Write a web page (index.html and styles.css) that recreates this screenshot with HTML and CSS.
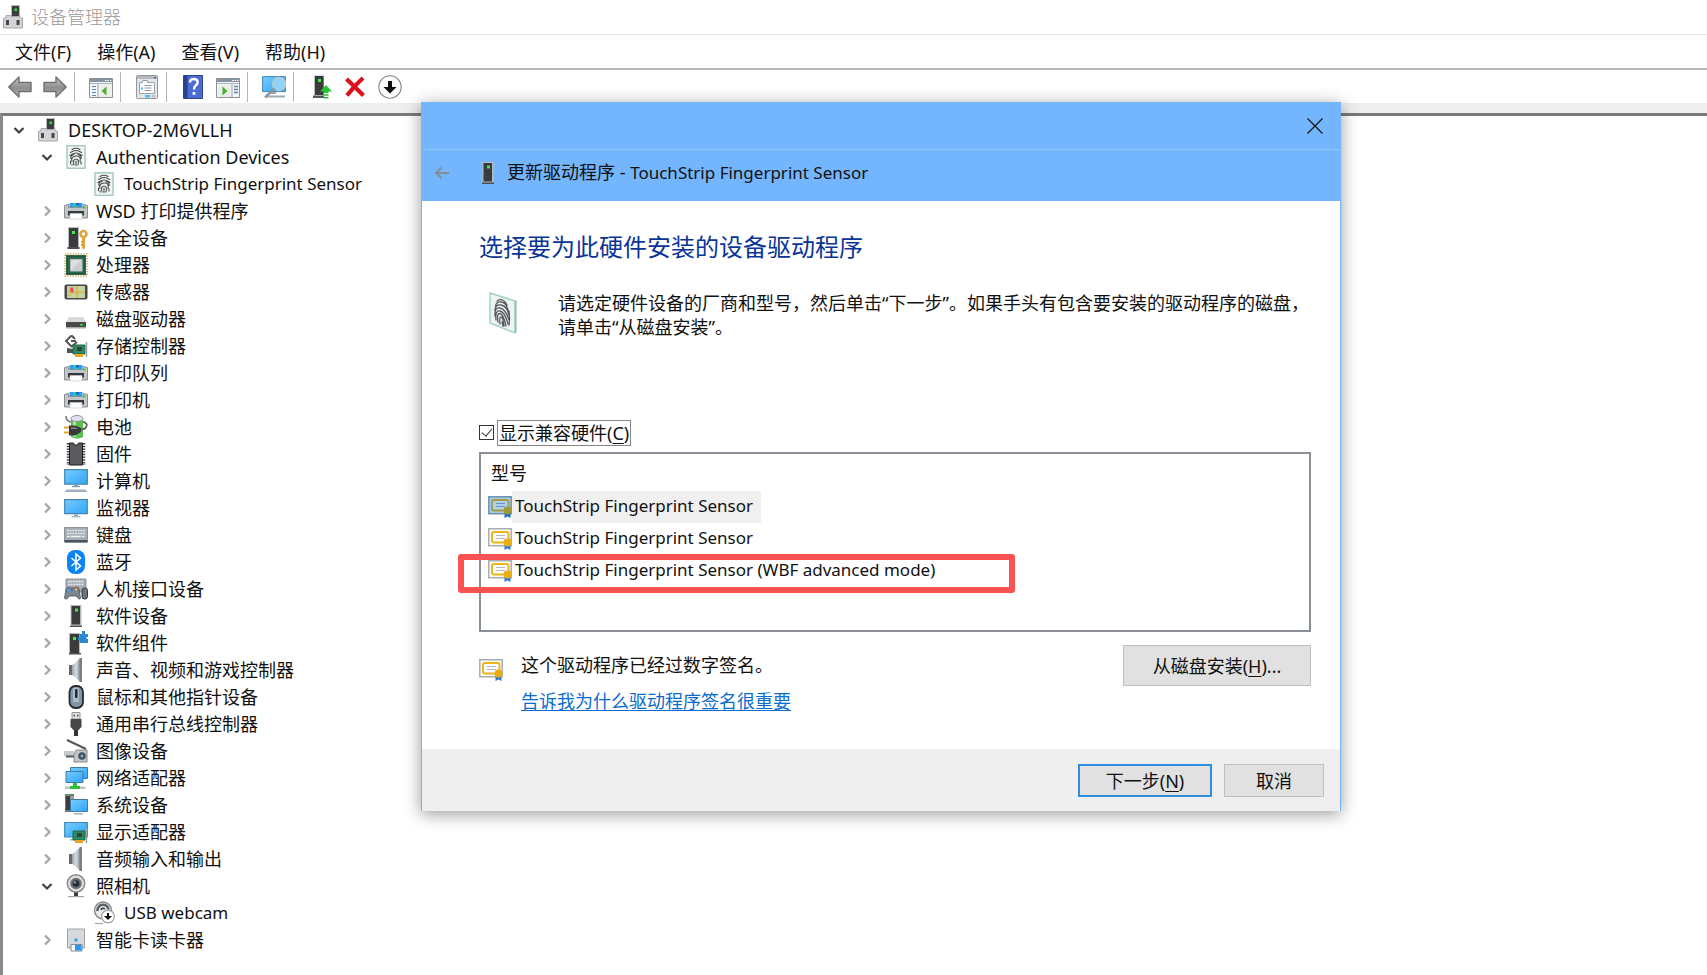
FILE: index.html
```html
<!DOCTYPE html>
<html lang="zh-CN">
<head>
  <meta charset="UTF-8">
  <title>设备管理器</title>
  <link rel="stylesheet" href="styles.css">
</head>
<body>
  <!-- Icon sprite, 24x24 grid unless noted -->
  <svg class="sprite" aria-hidden="true">
    <defs>
      <linearGradient id="gScreen" x1="0" y1="0" x2="1" y2="1">
        <stop offset="0" stop-color="#7ccbfd"/><stop offset=".5" stop-color="#52b8fb"/><stop offset="1" stop-color="#30a6f5"/>
      </linearGradient>
      <linearGradient id="gArrow" x1="0" y1="0" x2="0" y2="1">
        <stop offset="0" stop-color="#c6c6c6"/><stop offset=".55" stop-color="#8d8d8d"/><stop offset="1" stop-color="#bdbdbd"/>
      </linearGradient>
      <linearGradient id="gCone" x1="0" y1="0" x2="1" y2="0">
        <stop offset="0" stop-color="#9aa2aa"/><stop offset=".5" stop-color="#d8dde2"/><stop offset="1" stop-color="#8d959d"/>
      </linearGradient>
    </defs>

    <symbol id="i-open" viewBox="0 0 24 24"><path d="M7.5 10l4.500 4.500L16.500 10" fill="none" stroke="#404040" stroke-width="2.200"/></symbol>
    <symbol id="i-closed" viewBox="0 0 24 24"><path d="M10 7.500l4.500 4.500L10 16.500" fill="none" stroke="#a6a6a6" stroke-width="2.200"/></symbol>

    <symbol id="i-pc" viewBox="0 0 24 24">
      <path d="M10 0h9v13h-9z" fill="#b9bbbd"/><path d="M11 1h7v11h-7z" fill="#3c3d3f"/><path d="M13.500 3.500h2.500v2.500h-2.500z" fill="#3be040"/>
      <path d="M5 10.500h5v1h8v-1h1v2.500h2.500v10h-19V13H5z" fill="#d3d4d7" stroke="#a8a9ad"/>
      <path d="M5 15h3v5H5zM15.500 15h3v5h-3z" fill="#46474a"/>
    </symbol>
    <symbol id="i-finger" viewBox="0 0 24 24">
      <rect x="3" y=".8" width="18" height="22.500" fill="#f1f5f4" stroke="#a8cac3" stroke-width="1.500"/>
      <g fill="none" stroke="#46494b" stroke-width="1.100" stroke-linecap="round">
        <path d="M8 4.500q4-2.500 8 0M6.500 7.500q5.500-4 11 0M6 10.500q6-5 12 0M7 13.500q-1-3 3-4M17 13.500q1-3-3-4M8 16.500q-1.500-5 4-5.500t4 5.500M6.500 16v2.500M10 20q-1.500-6 2-6t2 6M12 16v4.500M8 19v1M17 17v2"/>
      </g>
    </symbol>
    <symbol id="i-finger-lg" viewBox="0 0 30 44">
      <path d="M2 2l25 8v32L2 32z" fill="#eff4f3" stroke="#9fd2c6" stroke-width="1.500"/><path d="M27 10l1.500-1v32L27 42" fill="#8ab8ad"/>
      <g fill="none" stroke="#55585b" stroke-width="1.300" stroke-linecap="round">
        <path d="M9 10q6-4 10 4M7.500 15q1-5 6-4t6.500 8M7 20q0-7 6-6t8 10M7 25q-.5-9 5-8t9 12M8 29q-1-10 4-9t8 13M10 31q-1.500-9 2-8.500T18 35M12 33q-1-7 1-7t3 9M21 20q1 8 0 14M14 31l1 4"/>
      </g>
    </symbol>
    <symbol id="i-printer" viewBox="0 0 24 24">
      <path d="M5.500 4h13v5h-13z" fill="#2f9bef"/><path d="M9 4h5v4H9z" fill="#28c8a0"/><path d="M12 4h3v2.500h-3z" fill="#1565c8"/>
      <path d="M.5 6.500L4.500 5.500v3h15v-3l4 1V19H.5z" fill="#c2c6ca" stroke="#8b9095"/>
      <path d="M4 12h16v4.500H4z" fill="#35373a"/><path d="M19 7.500h2.500V9.500H19z" fill="#31d835"/>
      <path d="M6 14.500h12V20H6z" fill="#fff" stroke="#c5c8cb" stroke-width=".7"/>
    </symbol>
    <symbol id="i-tower" viewBox="0 0 24 24">
      <path d="M6.500 1h11v20.500h-11z" fill="#b8babd"/><path d="M7.500 2h8.500v18.500H7.500z" fill="#3a3b3d"/>
      <path d="M6 21.500h12V23H6z" fill="#4c4d50"/><path d="M11 4.500h3v3h-3z" fill="#43ea48"/>
    </symbol>
    <symbol id="i-security" viewBox="0 0 24 24">
      <path d="M4 1h11v20H4z" fill="#b8babd"/><path d="M5 2h9v19H5z" fill="#3a3b3d"/><path d="M3.500 21h12v2h-12z" fill="#4c4d50"/><path d="M8 5h3v3H8z" fill="#43ea48"/>
      <circle cx="19.500" cy="8" r="3" fill="none" stroke="#dca640" stroke-width="2.600"/><path d="M18 11h3v11l-1.500 1.500L18 22z" fill="#e0a63a"/><path d="M17 15h1.500v1.500H17zM17 18h1.500v1.500H17z" fill="#c68b21"/>
    </symbol>
    <symbol id="i-cpu" viewBox="0 0 24 24">
      <rect x="1" y="1" width="22" height="22" fill="none" stroke="#d2a650" stroke-width="1.500" stroke-dasharray="1.300 1.300"/>
      <path d="M2 2h20v20H2z" fill="#2d6a50"/><path d="M3.500 3.500h17v17h-17z" fill="none" stroke="#1e5540"/>
      <path d="M6.500 6.500h11.500v11.500H6.500z" fill="#dcdee0" stroke="#b9bdbf"/><path d="M17.500 7v10.500H7z" fill="#c9cccf"/>
    </symbol>
    <symbol id="i-sensor" viewBox="0 0 24 24">
      <rect x=".5" y="4.500" width="23" height="15" rx="2" fill="#45474a"/><path d="M3 6h18v12H3z" fill="#bfd6a0"/>
      <path d="M3 11.500q9 2 18 .5M13 6v12M3 15h4" fill="none" stroke="#e3b24d" stroke-width="1.600"/><path d="M6 7.500h3.500v4L8 13l-2-2z" fill="#e8535a"/>
    </symbol>
    <symbol id="i-disk" viewBox="0 0 24 24">
      <path d="M5 10h14l3 5H2z" fill="#d9dadc"/><path d="M2 15h20v5.500H2z" fill="#47494b"/><path d="M2 20h20v1.500H2z" fill="#a6a9ab"/><path d="M16 17h3v1.500h-3z" fill="#34e03a"/>
    </symbol>
    <symbol id="i-card" viewBox="0 0 24 24">
      <path d="M9 11h12v9H9z" fill="#2c8a61" stroke="#1c6a48"/><path d="M13 13h5v4h-5z" fill="#3a3e40"/><path d="M22.500 8v15" stroke="#9ba0a4" stroke-width="1.500"/><path d="M11 20h8v3h-8z" fill="#f0a320"/>
    </symbol>
    <symbol id="i-storage" viewBox="0 0 24 24">
      <path d="M7.500 1.500L2 7l5.500 5.500L13 8M7.500 1.500L11 5M7 7h5" fill="none" stroke="#54575a" stroke-width="2"/><path d="M3 14l6 1v4H3z" fill="#505356"/>
      <use href="#i-card"/>
    </symbol>
    <symbol id="i-battery" viewBox="0 0 24 24">
      <path d="M7 4h12v18q-6 3-12 0z" fill="#5bc04d"/><path d="M9 5h3v17H9z" fill="#a8e79e"/><ellipse cx="13" cy="3.500" rx="6" ry="3" fill="#dfe1ee" stroke="#8d8fa2"/>
      <path d="M19 7q6 1 2.500 6-2 2-6 1" fill="none" stroke="#5f6163" stroke-width="1.800"/>
      <path d="M2 1q0 5 5 6" fill="none" stroke="#77797b" stroke-width="1.500"/><path d="M0 12.500h6M0 17.500h6" stroke="#dfa72e" stroke-width="2"/><path d="M5 10.500h6l6 2.500v4l-6 3.500H5z" fill="#37393b"/><path d="M7 12.500h4l3 1.500H7z" fill="#8c8f91"/>
    </symbol>
    <symbol id="i-chip" viewBox="0 0 24 24">
      <path d="M4.500 1v22M19.500 1v22" stroke="#4a4c4e" stroke-width="3.500" stroke-dasharray="1.500 1.200"/>
      <path d="M5.500 1h4l1 2h3l1-2h4v22h-13z" fill="#595b5e" stroke="#1d1e1f"/>
    </symbol>
    <symbol id="i-monitor" viewBox="0 0 24 24">
      <path d="M.7 3.700h22.600v14H.7z" fill="url(#gScreen)" stroke="#4387b4" stroke-width="1.200"/><path d="M10 18.500h4V20h-4z" fill="#8fa3b4"/><path d="M7.500 20h9v1.500h-9z" fill="#aebcc8"/>
    </symbol>
    <symbol id="i-computer" viewBox="0 0 24 24">
      <path d="M.7.700h22.600v14.500H.7z" fill="url(#gScreen)" stroke="#4387b4" stroke-width="1.200"/><path d="M10 16h4v1h-4z" fill="#8fa3b4"/><path d="M8 17h8v1.200H8z" fill="#8495a4"/><path d="M3 20.500h18l3 2.500H0z" fill="#9fb0c0"/>
    </symbol>
    <symbol id="i-keyboard" viewBox="0 0 24 24">
      <path d="M.5 4.500h23V19H.5z" fill="#a4adb5" stroke="#8c959c"/><path d="M.5 17h23v2.500H.5z" fill="#4b545b"/>
      <path d="M3 7.500h18M3 10.500h18" stroke="#f2f4f6" stroke-width="1.700" stroke-dasharray="1.700 1"/><path d="M3 13.500h18" stroke="#f2f4f6" stroke-width="1.700" stroke-dasharray="2.700 1 10 1"/>
    </symbol>
    <symbol id="i-bluetooth" viewBox="0 0 24 24">
      <rect x="3" y="0" width="18" height="24" rx="8" fill="#0a84f6"/><path d="M7.500 8l9 8-4.500 4V4l4.500 4-9 8" fill="none" stroke="#fff" stroke-width="1.600"/>
    </symbol>
    <symbol id="i-hid" viewBox="0 0 24 24">
      <path d="M2 2h20v13H2z" fill="#a4adb5" stroke="#8c959c"/><path d="M4 4.500h16M4 7.500h16" stroke="#f2f4f6" stroke-width="1.600" stroke-dasharray="1.700 1"/>
      <path d="M2 12q2-3 5-1h3q4-2 5 1l1.500 9q-1.500 3-4-2h-7Q2 24 .5 21z" fill="#7d868e" stroke="#4a5157" stroke-width=".8"/>
      <circle cx="5" cy="13" r="1.500" fill="#34a2f2"/><path d="M9 10h2v2H9z" fill="#ed4040"/><path d="M11 11.500h2v2h-2z" fill="#f3c030"/><path d="M7 12h2v2H7z" fill="#3878d8"/>
      <rect x="18" y="11" width="5.500" height="11" rx="2.500" fill="#6b747c" stroke="#30363b"/>
    </symbol>
    <symbol id="i-component" viewBox="0 0 24 24">
      <path d="M5 2h11v20H5z" fill="#b8babd"/><path d="M6 3h9v19H6z" fill="#3a3b3d"/><path d="M5 22h12v1.500H5z" fill="#4c4d50"/><path d="M9 6h3v3H9z" fill="#43ea48"/>
      <path d="M15.500 3H18V0h3v3h3v3h-1.500v2H24v4h-8.500V9H14V6h1.500z" fill="#2d87d0"/>
    </symbol>
    <symbol id="i-speaker" viewBox="0 0 24 24">
      <path d="M5 7h5v10H5z" fill="#626a72"/><path d="M8 7.500L16 .5v23l-8-7z" fill="url(#gCone)"/><path d="M15.500 0H18v24h-2.500z" fill="#777f87"/>
    </symbol>
    <symbol id="i-mouse" viewBox="0 0 24 24">
      <rect x="5.500" y="1" width="13.500" height="22" rx="6" fill="#8296aa" stroke="#26292c" stroke-width="1.800"/><path d="M9 3q3-1 6 0v14H9z" fill="#a9bacb"/><rect x="11" y="4" width="2.500" height="9" rx="1" fill="#25282b"/>
    </symbol>
    <symbol id="i-usb" viewBox="0 0 24 24">
      <path d="M8 .5h8V7H8z" fill="#e2e3e4" stroke="#909395"/><path d="M9.500 2.500h1.500v2H9.500zM13 2.500h1.500v2H13z" fill="#55585b"/><path d="M6.500 7h11v8l-3 3h-5l-3-3z" fill="#46484a"/><path d="M10 18h4v6h-4z" fill="#333536"/>
    </symbol>
    <symbol id="i-imaging" viewBox="0 0 24 24">
      <path d="M3 1l19 9" stroke="#55585a" stroke-width="2"/><path d="M0 12h10v5H0z" fill="#c6c8ca"/><path d="M2 16.500h8v2H2z" fill="#55585b"/>
      <path d="M12 11h11v12H10v-7z" fill="#c3c6c8" stroke="#85888b"/><circle cx="18" cy="17" r="3.800" fill="#3f5261"/><circle cx="18" cy="17" r="1.500" fill="#83a7bd"/>
    </symbol>
    <symbol id="i-network" viewBox="0 0 24 24">
      <path d="M6.500 1.500h17v11h-17z" fill="url(#gScreen)" stroke="#3c7ca8"/><path d="M2 5.500h17v11H2z" fill="url(#gScreen)" stroke="#3c7ca8"/>
      <path d="M9 17h4v3h3v3H6v-3h3z" fill="#36bd3d"/><path d="M1 20.500h5V23H1zM16 20.500h5.500V23H16z" fill="#bcc4c9"/>
    </symbol>
    <symbol id="i-system" viewBox="0 0 24 24">
      <path d="M1 1h9v18H1z" fill="#74787b"/><path d="M2 3h4v14H2z" fill="#3a3c3e"/><path d="M6.500 4h3M6.500 6h3" stroke="#d0d2d4"/><path d="M3 1.500h2V3H3z" fill="#35df3b"/>
      <path d="M6.500 6.500h17v12h-17z" fill="url(#gScreen)" stroke="#3c7ca8"/><path d="M10 20h9v1.500h-9z" fill="#9fb0bf"/>
    </symbol>
    <symbol id="i-display" viewBox="0 0 24 24">
      <path d="M.7 2.500h22.600v14.500H.7z" fill="url(#gScreen)" stroke="#4387b4" stroke-width="1.200"/><path d="M6 19h5v1.500H6z" fill="#a0b2c1"/><use href="#i-card"/>
    </symbol>
    <symbol id="i-camera" viewBox="0 0 24 24">
      <circle cx="12" cy="9.500" r="8.700" fill="#dcdee0" stroke="#898c8f" stroke-width="1.500"/><circle cx="12" cy="9.500" r="5" fill="#5d6064" stroke="#6f7377" stroke-width="1.500"/><circle cx="12" cy="9.500" r="3" fill="#1c2735"/><circle cx="11" cy="8.500" r="1.300" fill="#7f9bb8"/>
      <path d="M10 18.500h4V22h-4z" fill="#3c3e40"/><path d="M4 22h16v1.200H4z" fill="#a5a8ab"/>
    </symbol>
    <symbol id="i-webcam" viewBox="0 0 24 24">
      <circle cx="11" cy="9.500" r="8.500" fill="#e8e9ea" stroke="#898c8f" stroke-width="1.500"/><path d="M5.500 10a5.500 5.500 0 0 1 11-1.500" fill="none" stroke="#5f6265" stroke-width="2.500"/><path d="M9 9q1-3 4-1" stroke="#2e3338" stroke-width="1.500" fill="none"/>
      <path d="M3 22.500h8" stroke="#a5a8ab" stroke-width="1.200"/><circle cx="16" cy="15.500" r="6.300" fill="#fff" stroke="#a1a1a1" stroke-width="1.200"/><path d="M15 12h2v3h3l-4 4-4-4h3z" fill="#111"/>
    </symbol>
    <symbol id="i-smartcard" viewBox="0 0 24 24">
      <path d="M3.500 1h17v19h-17z" fill="#d5d9dc" stroke="#9da3a8"/><path d="M10.500 10.500h3v3h-3z" fill="#2d9ff0"/><path d="M7 16.500h11V23H7z" fill="#fff" stroke="#7e8890"/><path d="M11 17h6.500v5.500H11z" fill="#2398ee"/>
    </symbol>

    <!-- Toolbar -->
    <symbol id="t-back" viewBox="0 0 24 24"><path d="M.8 12L11 2v5.500h12v9H11V22z" fill="url(#gArrow)" stroke="#6f6f6f" stroke-width="1.400" stroke-linejoin="round"/></symbol>
    <symbol id="t-tree" viewBox="0 0 24 24">
      <path d="M.5 3.500h23v19H.5z" fill="#f4f5f6" stroke="#8b9299"/><path d="M1 4h22v3H1z" fill="#8693a1"/><path d="M16 5.500h1.500M18.500 5.500H20M21 5.500h1.500" stroke="#fff"/><path d="M1 8.500h22" stroke="#aab3bc"/><path d="M9 9v13" stroke="#9aa3ab"/>
      <path d="M3 11.500h4M3 14.500h4M3 17.500h4M3 20.500h4" stroke="#5b87b8" stroke-width="1.200"/><path d="M11 10h11.500v12H11z" fill="#eceeec"/><path d="M17.500 11.500v9l-5-4.500z" fill="#4bb227"/>
    </symbol>
    <symbol id="t-props" viewBox="0 0 24 24">
      <rect x="1.500" y=".5" width="21" height="23" rx="1" fill="#e4e6e9" stroke="#92979c"/><path d="M2 1h20v3H2z" fill="#b4bac0"/><path d="M19 2h2v1.500h-2z" fill="#5d6871"/>
      <path d="M4.500 7.500h3v-2h5v2h7v11h-15z" fill="#fff" stroke="#9ba2a9"/><path d="M9.500 10.500h7M9.500 13h7M9.500 15.500h7" stroke="#9098a0"/><path d="M6 12.500h2v2H6z" fill="#38c2f0"/><path d="M10 20h5v2.500h-5z" fill="#35c6f4"/><path d="M16.500 20h4v2.500h-4z" fill="#c0c4c8"/>
    </symbol>
    <symbol id="t-help" viewBox="0 0 24 24">
      <path d="M2.500.5h19v23h-19z" fill="#4b6cd0" stroke="#2f4390"/><path d="M3 1h3.500v22H3z" fill="#27408f"/><path d="M9 7.500q0-3.500 3.800-3.500t3.800 3.300q0 2-2 3.300-1.600 1.200-1.600 3.900" fill="none" stroke="#fff" stroke-width="2.400"/><path d="M11.600 17h2.800v2.800h-2.800z" fill="#fff"/>
    </symbol>
    <symbol id="t-action" viewBox="0 0 24 24">
      <path d="M.5 3.500h23v19H.5z" fill="#f4f5f6" stroke="#8b9299"/><path d="M1 4h22v3H1z" fill="#8693a1"/><path d="M16 5.500h1.500M18.500 5.500H20M21 5.500h1.500" stroke="#fff"/><path d="M1 8.500h22" stroke="#aab3bc"/><path d="M2 10h13v12H2z" fill="#eceeec"/><path d="M16 9v13" stroke="#9aa3ab"/>
      <path d="M18 11.500h4M18 14.500h4M18 17.500h4" stroke="#5b87b8" stroke-width="1.500"/><path d="M6.500 11.500v9l5-4.500z" fill="#4bb227"/>
    </symbol>
    <symbol id="t-scan" viewBox="0 0 24 24">
      <path d="M.6 1.600h22.800v15H.6z" fill="url(#gScreen)" stroke="#4387b4"/><path d="M9 18h5M5 21.500h18" stroke="#9caab6" stroke-width="2"/><circle cx="17" cy="9" r="6.500" fill="#8fd3f8" stroke="#b1c8d6" stroke-width="1.500"/><path d="M12.500 13.500L3 22.500" stroke="#8797a4" stroke-width="2.500"/>
    </symbol>
    <symbol id="t-update" viewBox="0 0 24 24">
      <path d="M6 .5h10V20H6z" fill="#b8babd"/><path d="M7 1h8.500v19H7z" fill="#3a3b3d"/><path d="M5 20.500h11V23H5z" fill="#55575a"/><path d="M10 4h3v3h-3z" fill="#43ea48"/>
      <path d="M18 10l6 6.500h-3.500V18h-5v-1.500H12z" fill="#22c52e"/><path d="M15.500 20h5M15.500 22.800h5" stroke="#22c52e" stroke-width="1.500"/>
    </symbol>
    <symbol id="t-remove" viewBox="0 0 24 24"><path d="M3.500 4Q11 11 20.500 20.500M20 3Q12 10 4 20.500" fill="none" stroke="#dd0f1c" stroke-width="4.200"/></symbol>
    <symbol id="t-down" viewBox="0 0 24 24"><circle cx="12" cy="12" r="11.200" fill="#fff" stroke="#828282" stroke-width="1.100"/><path d="M10 6h4v6h4.500L12 18.500 5.500 12H10z" fill="#111"/></symbol>

    <symbol id="i-cert" viewBox="0 0 24 24">
      <path d="M.8 1.800h22.400v17H.8z" fill="#fbfbfa" stroke="#a9adb0" stroke-width="1.500"/><rect x="4" y="5" width="16.500" height="10.500" rx="2" fill="#fff" stroke="#e8b616" stroke-width="1.900"/>
      <path d="M8 8.500h9M8 11.500h9" stroke="#b5b9bd" stroke-width="1.200"/><path d="M16.500 16h6v7l-3-1.500-3 1.500z" fill="#2f7fcb"/><circle cx="19.500" cy="15.500" r="3.900" fill="#e9ae0e"/>
    </symbol>
    <symbol id="i-cert-sel" viewBox="0 0 24 24">
      <path d="M.8 1.800h22.400v17H.8z" fill="#a3cae8" stroke="#7292ab" stroke-width="1.500"/><rect x="4" y="5" width="16.500" height="10.500" rx="2" fill="#acd2ee" stroke="#a59d45" stroke-width="1.900"/>
      <path d="M8 8.500h9M8 11.500h9" stroke="#6b93b3" stroke-width="1.200"/><path d="M16.500 16h6v7l-3-1.500-3 1.500z" fill="#1a73bd"/><circle cx="19.500" cy="15.500" r="3.900" fill="#a29a35"/>
    </symbol>
    <symbol id="i-left" viewBox="0 0 16 16"><path d="M15 8H2M7.500 2.500L2 8l5.500 5.500" fill="none" stroke="#858e98" stroke-width="2"/></symbol>
    <symbol id="i-close" viewBox="0 0 16 16"><path d="M.5.500l15 15M15.500.500l-15 15" fill="none" stroke="#111" stroke-width="1.200"/></symbol>
  </svg>

  <div class="window">
    <header class="titlebar">
      <svg class="icon"><use href="#i-pc"/></svg>
      <span>设备管理器</span>
    </header>

    <nav class="menubar">
      <button>文件(F)</button>
      <button>操作(A)</button>
      <button>查看(V)</button>
      <button>帮助(H)</button>
    </nav>

    <div class="toolbar">
      <button aria-label="后退"><svg class="icon"><use href="#t-back"/></svg></button>
      <button aria-label="前进"><svg class="icon flip"><use href="#t-back"/></svg></button>
      <span class="sep"></span>
      <button aria-label="显示/隐藏控制台树"><svg class="icon"><use href="#t-tree"/></svg></button>
      <span class="sep"></span>
      <button aria-label="属性"><svg class="icon"><use href="#t-props"/></svg></button>
      <span class="sep"></span>
      <button aria-label="帮助"><svg class="icon"><use href="#t-help"/></svg></button>
      <button aria-label="显示/隐藏操作窗格"><svg class="icon"><use href="#t-action"/></svg></button>
      <span class="sep"></span>
      <button aria-label="扫描检测硬件改动"><svg class="icon"><use href="#t-scan"/></svg></button>
      <span class="sep"></span>
      <button aria-label="更新驱动程序"><svg class="icon"><use href="#t-update"/></svg></button>
      <button aria-label="卸载设备"><svg class="icon"><use href="#t-remove"/></svg></button>
      <button aria-label="禁用设备"><svg class="icon"><use href="#t-down"/></svg></button>
    </div>

    <main class="pane">
      <ul class="tree">
        <li>
          <div class="node"><button class="twisty" aria-label="折叠"><svg class="icon"><use href="#i-open"/></svg></button><svg class="icon"><use href="#i-pc"/></svg><span>DESKTOP-2M6VLLH</span></div>
          <ul>
            <li>
              <div class="node"><button class="twisty" aria-label="折叠"><svg class="icon"><use href="#i-open"/></svg></button><svg class="icon"><use href="#i-finger"/></svg><span>Authentication Devices</span></div>
              <ul>
                <li><div class="node leaf"><svg class="icon"><use href="#i-finger"/></svg><span class="latin">TouchStrip Fingerprint Sensor</span></div></li>
              </ul>
            </li>
            <li><div class="node"><button class="twisty" aria-label="展开"><svg class="icon"><use href="#i-closed"/></svg></button><svg class="icon"><use href="#i-printer"/></svg><span>WSD 打印提供程序</span></div></li>
            <li><div class="node"><button class="twisty" aria-label="展开"><svg class="icon"><use href="#i-closed"/></svg></button><svg class="icon"><use href="#i-security"/></svg><span>安全设备</span></div></li>
            <li><div class="node"><button class="twisty" aria-label="展开"><svg class="icon"><use href="#i-closed"/></svg></button><svg class="icon"><use href="#i-cpu"/></svg><span>处理器</span></div></li>
            <li><div class="node"><button class="twisty" aria-label="展开"><svg class="icon"><use href="#i-closed"/></svg></button><svg class="icon"><use href="#i-sensor"/></svg><span>传感器</span></div></li>
            <li><div class="node"><button class="twisty" aria-label="展开"><svg class="icon"><use href="#i-closed"/></svg></button><svg class="icon"><use href="#i-disk"/></svg><span>磁盘驱动器</span></div></li>
            <li><div class="node"><button class="twisty" aria-label="展开"><svg class="icon"><use href="#i-closed"/></svg></button><svg class="icon"><use href="#i-storage"/></svg><span>存储控制器</span></div></li>
            <li><div class="node"><button class="twisty" aria-label="展开"><svg class="icon"><use href="#i-closed"/></svg></button><svg class="icon"><use href="#i-printer"/></svg><span>打印队列</span></div></li>
            <li><div class="node"><button class="twisty" aria-label="展开"><svg class="icon"><use href="#i-closed"/></svg></button><svg class="icon"><use href="#i-printer"/></svg><span>打印机</span></div></li>
            <li><div class="node"><button class="twisty" aria-label="展开"><svg class="icon"><use href="#i-closed"/></svg></button><svg class="icon"><use href="#i-battery"/></svg><span>电池</span></div></li>
            <li><div class="node"><button class="twisty" aria-label="展开"><svg class="icon"><use href="#i-closed"/></svg></button><svg class="icon"><use href="#i-chip"/></svg><span>固件</span></div></li>
            <li><div class="node"><button class="twisty" aria-label="展开"><svg class="icon"><use href="#i-closed"/></svg></button><svg class="icon"><use href="#i-computer"/></svg><span>计算机</span></div></li>
            <li><div class="node"><button class="twisty" aria-label="展开"><svg class="icon"><use href="#i-closed"/></svg></button><svg class="icon"><use href="#i-monitor"/></svg><span>监视器</span></div></li>
            <li><div class="node"><button class="twisty" aria-label="展开"><svg class="icon"><use href="#i-closed"/></svg></button><svg class="icon"><use href="#i-keyboard"/></svg><span>键盘</span></div></li>
            <li><div class="node"><button class="twisty" aria-label="展开"><svg class="icon"><use href="#i-closed"/></svg></button><svg class="icon"><use href="#i-bluetooth"/></svg><span>蓝牙</span></div></li>
            <li><div class="node"><button class="twisty" aria-label="展开"><svg class="icon"><use href="#i-closed"/></svg></button><svg class="icon"><use href="#i-hid"/></svg><span>人机接口设备</span></div></li>
            <li><div class="node"><button class="twisty" aria-label="展开"><svg class="icon"><use href="#i-closed"/></svg></button><svg class="icon"><use href="#i-tower"/></svg><span>软件设备</span></div></li>
            <li><div class="node"><button class="twisty" aria-label="展开"><svg class="icon"><use href="#i-closed"/></svg></button><svg class="icon"><use href="#i-component"/></svg><span>软件组件</span></div></li>
            <li><div class="node"><button class="twisty" aria-label="展开"><svg class="icon"><use href="#i-closed"/></svg></button><svg class="icon"><use href="#i-speaker"/></svg><span>声音、视频和游戏控制器</span></div></li>
            <li><div class="node"><button class="twisty" aria-label="展开"><svg class="icon"><use href="#i-closed"/></svg></button><svg class="icon"><use href="#i-mouse"/></svg><span>鼠标和其他指针设备</span></div></li>
            <li><div class="node"><button class="twisty" aria-label="展开"><svg class="icon"><use href="#i-closed"/></svg></button><svg class="icon"><use href="#i-usb"/></svg><span>通用串行总线控制器</span></div></li>
            <li><div class="node"><button class="twisty" aria-label="展开"><svg class="icon"><use href="#i-closed"/></svg></button><svg class="icon"><use href="#i-imaging"/></svg><span>图像设备</span></div></li>
            <li><div class="node"><button class="twisty" aria-label="展开"><svg class="icon"><use href="#i-closed"/></svg></button><svg class="icon"><use href="#i-network"/></svg><span>网络适配器</span></div></li>
            <li><div class="node"><button class="twisty" aria-label="展开"><svg class="icon"><use href="#i-closed"/></svg></button><svg class="icon"><use href="#i-system"/></svg><span>系统设备</span></div></li>
            <li><div class="node"><button class="twisty" aria-label="展开"><svg class="icon"><use href="#i-closed"/></svg></button><svg class="icon"><use href="#i-display"/></svg><span>显示适配器</span></div></li>
            <li><div class="node"><button class="twisty" aria-label="展开"><svg class="icon"><use href="#i-closed"/></svg></button><svg class="icon"><use href="#i-speaker"/></svg><span>音频输入和输出</span></div></li>
            <li>
              <div class="node"><button class="twisty" aria-label="折叠"><svg class="icon"><use href="#i-open"/></svg></button><svg class="icon"><use href="#i-camera"/></svg><span>照相机</span></div>
              <ul>
                <li><div class="node leaf"><svg class="icon"><use href="#i-webcam"/></svg><span class="latin">USB webcam</span></div></li>
              </ul>
            </li>
            <li><div class="node"><button class="twisty" aria-label="展开"><svg class="icon"><use href="#i-closed"/></svg></button><svg class="icon"><use href="#i-smartcard"/></svg><span>智能卡读卡器</span></div></li>
          </ul>
        </li>
      </ul>
    </main>
  </div>

  <section class="dialog" role="dialog" aria-labelledby="wizardTitle">
    <div class="dialog-caption">
      <button class="close" aria-label="关闭"><svg><use href="#i-close"/></svg></button>
    </div>
    <div class="dialog-title">
      <button class="back" aria-label="返回"><svg><use href="#i-left"/></svg></button>
      <svg class="icon"><use href="#i-tower"/></svg>
      <span id="wizardTitle">更新驱动程序 - <span class="latin">TouchStrip Fingerprint Sensor</span></span>
    </div>

    <div class="dialog-body">
      <h1>选择要为此硬件安装的设备驱动程序</h1>
      <div class="intro">
        <svg class="device"><use href="#i-finger-lg"/></svg>
        <p>请选定硬件设备的厂商和型号，然后单击“下一步”。如果手头有包含要安装的驱动程序的磁盘，请单击“从磁盘安装”。</p>
      </div>

      <div class="compat">
        <input type="checkbox" id="compat" checked>
        <label for="compat">显示兼容硬件(<u>C</u>)</label>
      </div>

      <div class="models">
        <table>
          <thead>
            <tr><th>型号</th></tr>
          </thead>
          <tbody>
            <tr class="selected"><td><div class="model"><svg class="icon"><use href="#i-cert-sel"/></svg><span class="latin">TouchStrip Fingerprint Sensor</span></div></td></tr>
            <tr><td><div class="model"><svg class="icon"><use href="#i-cert"/></svg><span class="latin">TouchStrip Fingerprint Sensor</span></div></td></tr>
            <tr><td><div class="model marked"><svg class="icon"><use href="#i-cert"/></svg><span class="latin">TouchStrip Fingerprint Sensor (WBF advanced mode)</span></div></td></tr>
          </tbody>
        </table>
      </div>

      <div class="signed">
        <svg class="icon"><use href="#i-cert"/></svg>
        <div class="signed-text">
          <span>这个驱动程序已经过数字签名。</span>
          <a href="#">告诉我为什么驱动程序签名很重要</a>
        </div>
        <button class="btn disk">从磁盘安装(<u>H</u>)...</button>
      </div>
    </div>

    <footer class="dialog-footer">
      <button class="btn next">下一步(<u>N</u>)</button>
      <button class="btn cancel">取消</button>
    </footer>
  </section>
</body>
</html>
```

FILE: styles.css
```css
*, *::after {
  box-sizing: border-box;
}
body {
  margin: 0;
  height: 100vh;
  overflow: hidden;
  position: relative;
  background: #fff;
  color: #111;
  font-family: "Noto Sans", "Noto Sans CJK SC", sans-serif;
  font-size: 18px;
  line-height: 24px;
}
button {
  font: inherit;
  color: inherit;
  border: none;
  background: none;
  padding: 0;
}
ul {
  list-style: none;
  margin: 0;
  padding: 0;
}
u {
  text-underline-offset: 3px;
  text-decoration-thickness: 1px;
}
.sprite {
  position: absolute;
  width: 0;
  height: 0;
}
.icon {
  width: 24px;
  height: 24px;
  flex: none;
}
.flip { transform: scaleX(-1); }
/* Latin runs sit a little smaller next to Chinese */
.latin { font-size: 17px; }

/* Main window */
.window {
  display: flex;
  flex-direction: column;
  height: 100%;
}
.titlebar {
  display: flex;
  align-items: center;
  gap: 6px;
  height: 34px;
  padding-left: 1px;
  color: #999;
  font-weight: 300;
}
.menubar {
  display: flex;
  height: 34px;
  padding-left: 2px;
  border-top: 1px solid #e6e6e6;
}
.menubar button { padding: 0 13px; }
.toolbar {
  display: flex;
  align-items: center;
  height: 35px;
  padding-left: 2px;
  border-top: 2px solid #b4b6b9;
}
.toolbar button {
  display: flex;
  align-items: center;
  justify-content: center;
  width: 35px;
  height: 32px;
}
.sep {
  width: 1px;
  height: 30px;
  margin: 0 8px 0 2px;
  background: #b4b4b4;
}
.pane {
  flex: 1;
  min-height: 0;
  overflow: hidden;
  border-top: 10px solid #eee;
}
.tree {
  height: 100%;
  padding-left: 2px;
  border-top: 3px solid #7a7a7a;
  border-left: 3px solid #8a8a8a;
}
.tree ul { padding-left: 28px; }
.node {
  display: flex;
  align-items: center;
  height: 27px;
  white-space: nowrap;
}
.node > .icon { margin: 0 8px 0 3px; }
.twisty {
  display: flex;
  justify-content: center;
  width: 28px;
}
.leaf { padding-left: 28px; }

/* Wizard */
.dialog {
  position: absolute;
  top: 102px;
  left: 421px;
  width: 920px;
  background: #fff;
  border: 1px solid #74b6fd;
  border-bottom: none;
  box-shadow: 0 3px 16px rgba(0,0,0,0.4);
}
.dialog-caption {
  display: flex;
  justify-content: flex-end;
  height: 46px;
  background: #74b6fd;
}
.close {
  width: 50px;
  height: 46px;
}
.close svg {
  display: block;
  width: 16px;
  height: 16px;
  margin: 0 auto;
}
.dialog-title {
  display: flex;
  align-items: center;
  height: 52px;
  padding: 0 0 6px 12px;
  border-top: 1px solid #8ac8fb;
  background: #74b6fd;
}
.back svg {
  display: block;
  width: 16px;
  height: 16px;
}
.dialog-title .icon { margin: 0 7px 0 26px; }
.dialog-body {
  height: 548px;
  padding: 28px 29px 0 57px;
}
h1 {
  margin: 0;
  color: #0a3497;
  font-size: 24px;
  font-weight: 400;
  line-height: 36px;
}
.intro {
  display: flex;
  height: 154px;
  padding-top: 26px;
}
.device {
  flex: none;
  width: 30px;
  height: 44px;
  margin: 0 40px 0 9px;
}
.intro p { margin: 0; }
.compat {
  display: flex;
  align-items: center;
  gap: 3px;
  height: 27px;
}
.compat input {
  appearance: none;
  display: flex;
  justify-content: center;
  width: 15px;
  height: 15px;
  margin: 0;
  border: 1px solid #333;
}
.compat input:checked::after {
  content: "";
  width: 6px;
  height: 10px;
  border: solid #333;
  border-width: 0 1px 1px 0;
  transform: rotate(40deg);
}
.compat label {
  padding: 0 1px;
  border: 1px solid #858585;
}
.models {
  height: 180px;
  margin-top: 6px;
  border: 2px solid #8b8f99;
}
.models table {
  width: 100%;
  border-collapse: collapse;
}
.models th {
  height: 37px;
  padding: 1px 10px 0;
  font-weight: 400;
  text-align: left;
}
.models td { padding: 0 0 0 7px; }
.model {
  display: flex;
  align-items: center;
  position: relative;
  height: 32px;
}
.model .latin {
  padding: 0 8px 2px 3px;
  line-height: 30px;
}
.selected .latin { background: #f0f0f0; }
.marked::after {
  content: "";
  position: absolute;
  top: -1px;
  left: -30px;
  width: 557px;
  height: 39px;
  border: 6px solid #fa5252;
  border-radius: 3px;
}
.signed {
  display: flex;
  align-items: flex-start;
  margin-top: 13px;
}
.signed > .icon { margin: 13px 18px 0 0; }
.signed-text {
  display: flex;
  flex-direction: column;
  gap: 12px;
  padding-top: 8px;
}
.signed-text a {
  color: #0a6cce;
  text-underline-offset: 2px;
}
.btn {
  height: 33px;
  border: 1px solid #bfbfbf;
  background: #e1e1e1;
}
.disk {
  width: 188px;
  height: 41px;
  margin-left: auto;
}
.dialog-footer {
  display: flex;
  justify-content: flex-end;
  gap: 12px;
  padding: 15px 16px 14px;
  background: #efefef;
}
.next {
  width: 134px;
  border: 2px solid #2e8edf;
}
.cancel { width: 100px; }
```
